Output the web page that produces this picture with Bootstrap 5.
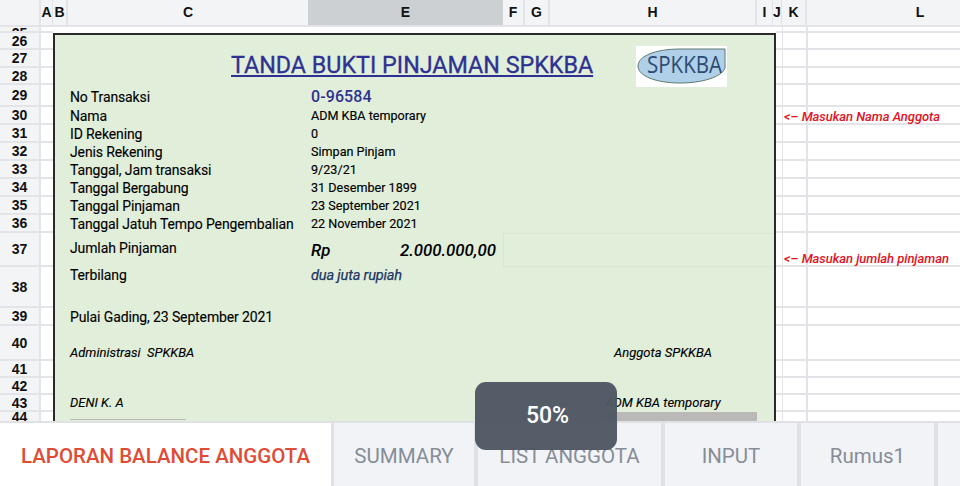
<!doctype html>
<html lang="id">
<head>
<meta charset="utf-8">
<title>SPKKBA</title>
<link href="https://cdn.jsdelivr.net/npm/bootstrap@5.3.0/dist/css/bootstrap.min.css" rel="stylesheet">
<style>
html,body{margin:0;width:960px;height:486px;overflow:hidden;background:#fff;font-family:Roboto,"Liberation Sans",sans-serif;color:#000}
.app{width:960px;height:486px;overflow:hidden}
.colbar{height:27px;background:#f3f4f6;border-bottom:2px solid #e2e4e8;font:700 14px/25px "Liberation Sans",sans-serif;color:#111;overflow:hidden}
.colbar>div{border-right:2px solid #e2e4e8;text-align:center;flex:none}
.colbar .ch0{width:41px}.colbar .cha{width:12px;border-right-width:1px}.colbar .chb{width:15px}.colbar .chc{width:240px;border-right:0}
.colbar .che{width:195px;background:#cdd0d3;border-right:0}.colbar .chf{width:22px}.colbar .chg{width:25px}.colbar .chh{width:207px}
.colbar .chi{width:16px;border-right-width:1px}.colbar .chj{width:9px;border-right-width:1px}.colbar .chk{width:25px}.colbar .chl{width:226px;border-right:0}
.sheet{height:394px;overflow:hidden}
.rowhd{width:41px;flex:none;background:#f3f4f6;border-right:2px solid #e2e4e8;font:700 14px/1 "Liberation Sans",sans-serif;color:#111}
.rowhd>div,.rt>div,.acol>div{border-bottom:2px solid #e2e4e8}
.rowhd>div{display:flex;align-items:center;justify-content:center}
.acol{width:12px;flex:none}
.rs6{height:6px;overflow:hidden;align-items:flex-end!important}
.rs6 span{margin-bottom:-9px}
.rs17{height:17px}.rs18{height:18px}.rs22{height:22px}.rs34{height:34px}.rs41{height:41px}.rs35{height:35px}.rs12{height:12px}
.docu{width:723px;flex:none;background:#e1eeda;border:solid #2a2a2a;border-width:2px 2px 0 2px;margin-top:6px;position:relative;height:400px}
.docrow{display:flex;align-items:center;padding-left:15px;font-size:14px;letter-spacing:-.12px;white-space:nowrap;line-height:1.2;-webkit-text-stroke:.12px #000}
.docrow.rs22{padding-top:2px}
.lbl{width:241px;flex:none}
.val{font-size:12.6px;letter-spacing:0;-webkit-text-stroke:.15px #000}
.ttl{height:50px;padding:17px 0 0 176px;align-items:flex-start;-webkit-text-stroke:0}
.ttl span{width:362px;font-size:23.3px;color:#2e3192;letter-spacing:0;text-decoration:underline;text-underline-offset:2px;text-decoration-thickness:1.5px;text-align:center;line-height:1.2;-webkit-text-stroke:.3px #2e3192}
.logo{position:absolute;left:581px;top:11px}
.noval{font-size:16px;font-weight:500;color:#2e3192;letter-spacing:.1px;-webkit-text-stroke:0}
.big{font-size:16.8px;font-weight:500;font-style:italic;letter-spacing:0;-webkit-text-stroke:0}
.rpx{width:185px;display:flex;justify-content:space-between;flex:none}
.lift{margin-top:-3px}
.fcell{align-self:stretch;flex:1 1 auto;margin-left:7px;border:solid #d8e6d1;border-width:1px 0 1px 1px}
.terb{align-items:flex-start}
.terb .val{font-size:14.6px;font-style:italic;color:#1f3864;letter-spacing:-.18px;-webkit-text-stroke:.25px #1f3864}
.ital{font-size:13px;font-style:italic;letter-spacing:0}
.tall{align-items:flex-end}
.sgn{width:480px;flex:none}
.sgr{width:226px;flex:none;text-align:center}
.rs17.ital{padding-bottom:2px}
.lines44{height:9px;align-items:flex-start}
.stub{width:116px;height:1px;background:#b9b9b6;margin-top:7px;flex:none}
.gbar{width:153px;height:9px;background:#bbb8b8;margin-left:418px;flex:none}
.rt{width:184px;flex:none;position:relative}
.rt>div{position:relative;font-size:13px;font-style:italic;font-weight:500;color:#e2121e;white-space:nowrap;letter-spacing:-.05px}
.rt .ln1,.rt .ln2{position:absolute;top:0;bottom:0;width:2px;background:#e2e4e8;border:0}
.rt .ln1{left:6px;width:1px}.rt .ln2{left:30px}
.nt{position:absolute;left:8px;z-index:1}
.nta{top:0}.ntb{top:16px}
.tabbar{height:65px;background:#dfe1e5;padding-top:2px;gap:3px;position:relative;z-index:2;font-size:20.5px;white-space:nowrap;color:#878d96}
.tabi{background:#f1f3f6;display:flex;align-items:center;justify-content:center;flex:none;height:63px;padding-top:3px}
.tabi.on{background:#fff;color:#e04b35;font-weight:500;width:331px}
.t2{width:140px}.t3{width:183px;margin-left:1px}.t4{width:132px;margin-left:1px}.t5{width:133px;margin-left:1px}.t6{width:22px;margin-left:1px}
.hud{position:absolute;left:475px;top:382px;width:142px;height:68px;border-radius:11px;background:rgba(80,88,99,.97);color:#fff;font-size:23px;font-weight:500;display:flex;align-items:center;justify-content:center;padding-left:3px;z-index:3}
</style>
</head>
<body>
<div class="app position-relative">
  <div class="colbar d-flex">
    <div class="ch0"></div><div class="cha">A</div><div class="chb">B</div><div class="chc">C</div><div class="che">E</div><div class="chf">F</div><div class="chg">G</div><div class="chh">H</div><div class="chi">I</div><div class="chj">J</div><div class="chk">K</div><div class="chl">L</div>
  </div>
  <div class="sheet d-flex">
    <div class="rowhd">
      <div class="rs6"><span>25</span></div><div class="rs17">26</div><div class="rs18">27</div><div class="rs17">28</div><div class="rs22">29</div><div class="rs18">30</div><div class="rs18">31</div><div class="rs18">32</div><div class="rs18">33</div><div class="rs18">34</div><div class="rs18">35</div><div class="rs18">36</div><div class="rs34">37</div><div class="rs41">38</div><div class="rs18">39</div><div class="rs35">40</div><div class="rs17">41</div><div class="rs17">42</div><div class="rs17">43</div><div class="rs12">44</div>
    </div>
    <div class="acol">
      <div class="rs6"></div><div class="rs17"></div><div class="rs18"></div><div class="rs17"></div><div class="rs22"></div><div class="rs18"></div><div class="rs18"></div><div class="rs18"></div><div class="rs18"></div><div class="rs18"></div><div class="rs18"></div><div class="rs18"></div><div class="rs34"></div><div class="rs41"></div><div class="rs18"></div><div class="rs35"></div><div class="rs17"></div><div class="rs17"></div><div class="rs17"></div><div class="rs12"></div>
    </div>
    <div class="docu">
      <div class="docrow ttl"><span>TANDA BUKTI PINJAMAN SPKKBA</span></div>
      <svg class="logo" width="91" height="41" viewBox="0 0 91 41" role="img" aria-label="Logo SPKKBA">
        <rect width="91" height="41" fill="#fff"/>
        <path d="M2 20C2 10 20 3 44 3H89V22C86 31 66 37 44 37C20 37 2 30 2 20Z" fill="#b0cfe8" stroke="#5f7a72" stroke-width="1"/>
        <text x="11" y="27" font-family="Open Sans,Liberation Sans,sans-serif" font-size="23" textLength="75" lengthAdjust="spacingAndGlyphs" fill="#2c4b70">SPKKBA</text>
      </svg>
      <div class="docrow rs22"><div class="lbl">No Transaksi</div><div class="noval">0-96584</div></div>
      <div class="docrow rs18"><div class="lbl">Nama</div><div class="val">ADM KBA temporary</div></div>
      <div class="docrow rs18"><div class="lbl">ID Rekening</div><div class="val">0</div></div>
      <div class="docrow rs18"><div class="lbl">Jenis Rekening</div><div class="val">Simpan Pinjam</div></div>
      <div class="docrow rs18"><div class="lbl">Tanggal, Jam transaksi</div><div class="val">9/23/21</div></div>
      <div class="docrow rs18"><div class="lbl">Tanggal Bergabung</div><div class="val">31 Desember 1899</div></div>
      <div class="docrow rs18"><div class="lbl">Tanggal Pinjaman</div><div class="val">23 September 2021</div></div>
      <div class="docrow rs18"><div class="lbl">Tanggal Jatuh Tempo Pengembalian</div><div class="val">22 November 2021</div></div>
      <div class="docrow rs34"><div class="lbl lift">Jumlah Pinjaman</div><div class="big rpx"><span>Rp</span><span>2.000.000,00</span></div><div class="fcell"></div></div>
      <div class="docrow rs41 terb"><div class="lbl">Terbilang</div><div class="val">dua juta rupiah</div></div>
      <div class="docrow rs18"><div class="lbl">Pulai Gading, 23 September 2021</div></div>
      <div class="docrow rs35 ital tall"><div class="sgn">Administrasi&nbsp; SPKKBA</div><div class="sgr">Anggota SPKKBA</div></div>
      <div class="docrow rs17"></div>
      <div class="docrow rs17"></div>
      <div class="docrow rs17 ital"><div class="sgn">DENI K. A</div><div class="sgr">ADM KBA temporary</div></div>
      <div class="docrow lines44"><div class="stub"></div><div class="gbar"></div></div>
    </div>
    <div class="rt">
      <i class="ln1"></i><i class="ln2"></i>
      <div class="rs6"></div><div class="rs17"></div><div class="rs18"></div><div class="rs17"></div><div class="rs22"></div>
      <div class="rs18"><span class="nt nta">&lt;– Masukan Nama Anggota</span></div>
      <div class="rs18"></div><div class="rs18"></div><div class="rs18"></div><div class="rs18"></div><div class="rs18"></div><div class="rs18"></div>
      <div class="rs34"><span class="nt ntb">&lt;– Masukan jumlah pinjaman</span></div>
      <div class="rs41"></div><div class="rs18"></div><div class="rs35"></div><div class="rs17"></div><div class="rs17"></div><div class="rs17"></div><div class="rs12"></div>
    </div>
  </div>
  <div class="tabbar d-flex">
    <div class="tabi on">LAPORAN BALANCE ANGGOTA</div>
    <div class="tabi t2">SUMMARY</div>
    <div class="tabi t3">LIST ANGGOTA</div>
    <div class="tabi t4">INPUT</div>
    <div class="tabi t5">Rumus1</div>
    <div class="tabi t6"></div>
  </div>
  <div class="hud">50%</div>
</div>
<script src="https://cdn.jsdelivr.net/npm/bootstrap@5.3.0/dist/js/bootstrap.bundle.min.js"></script>
</body>
</html>
